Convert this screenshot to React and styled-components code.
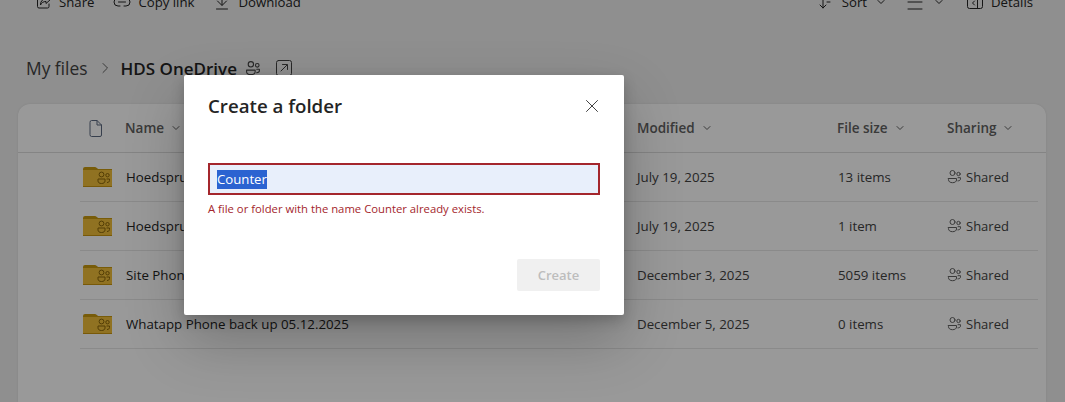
import React from "react";
import styled, { createGlobalStyle } from "styled-components";

const Global = createGlobalStyle`
  html, body { margin: 0; padding: 0; height: 100%; overflow: hidden; }
  body { font-family: "Open Sans", "Noto Sans", "Liberation Sans", sans-serif; background: #eeeeee; color: #242424; }
`;

const Page = styled.div`
  width: 1065px;
  height: 402px;
  position: relative;
  overflow: hidden;
  background: #eeeeee;
  display: flex;
  flex-direction: column;
  padding: 0 19px 0 18px;
  box-sizing: border-box;
`;

const Toolbar = styled.div`
  height: 24px;
  margin: -10px 0 0;
  display: flex;
  align-items: center;
  justify-content: space-between;
  padding: 0 13px 0 18px;
  font-size: 13.2px;
  flex: none;
`;

const ToolGroup = styled.div`
  display: flex;
  align-items: center;
`;

const ToolItem = styled.div`
  display: flex;
  align-items: center;
  gap: ${(p) => p.$gap ?? 8}px;
  margin-left: ${(p) => p.$left ?? 0}px;
  white-space: nowrap;
`;

const Crumbs = styled.div`
  display: flex;
  align-items: center;
  height: 28px;
  margin: 40px 0 0 8px;
  font-size: 17.4px;
  flex: none;
`;

const CrumbLink = styled.span`
  color: #424242;
`;

const CrumbCurrent = styled.span`
  font-weight: 600;
  font-size: 17px;
  color: #242424;
`;

const CrumbIcon = styled.span`
  display: inline-flex;
  margin-left: ${(p) => p.$left}px;
  margin-right: ${(p) => p.$right ?? 0}px;
`;

const Card = styled.div`
  margin-top: 22px;
  flex: 1;
  background: #ffffff;
  border-radius: 12px 12px 0 0;
  box-shadow: 0 0 2px rgba(0, 0, 0, 0.1);
`;

const columns = `
  display: grid;
  grid-template-columns: 46px 511px 201px 109px 1fr;
  align-items: center;
`;

const HeaderRow = styled.div`
  ${columns}
  height: 48px;
  padding-left: 62px;
  border-bottom: 1px solid #dcdcdc;
  font-size: 13.5px;
  font-weight: 600;
  color: #616161;
`;

const HeaderCell = styled.div`
  display: flex;
  align-items: center;
  gap: 8px;
  margin-left: ${(p) => p.$shift ?? 0}px;
`;

const HeaderIcon = styled.div`
  display: flex;
  padding-left: 9px;
`;

const Rows = styled.div`
  margin: 0 8px 0 62px;
`;

const Row = styled.div`
  ${columns}
  height: 48px;
  border-bottom: 1px solid #e6e6e6;
  font-size: 13.3px;
  line-height: 18px;
  color: #242424;
`;

const FolderCell = styled.div`
  display: flex;
  padding-left: 3px;
`;

const NameCell = styled.div`
  white-space: nowrap;
  margin-top: -1px;
`;

const MetaCell = styled.div`
  color: #424242;
  margin-top: -1px;
  white-space: nowrap;
`;

const SharedCell = styled.div`
  display: flex;
  align-items: center;
  gap: 4px;
  margin-top: -1px;
  color: #424242;
  font-size: 13px;
`;

const Overlay = styled.div`
  position: absolute;
  inset: 0;
  background: rgba(0, 0, 0, 0.4);
`;

const Dialog = styled.div`
  position: absolute;
  left: 184px;
  top: 75px;
  width: 440px;
  height: 240px;
  box-sizing: border-box;
  padding: 17px 24px 24px;
  background: #ffffff;
  border-radius: 2px;
  box-shadow: 0 25px 58px rgba(0, 0, 0, 0.24), 0 5px 14px rgba(0, 0, 0, 0.2);
  display: flex;
  flex-direction: column;
`;

const DialogHead = styled.div`
  display: flex;
  align-items: center;
  justify-content: space-between;
  height: 27px;
`;

const Title = styled.div`
  font-size: 18.7px;
  font-weight: 600;
  color: #242424;
`;

const CloseButton = styled.button`
  border: 0;
  background: none;
  padding: 0;
  display: flex;
  margin-right: 1px;
  color: #424242;
`;

const Field = styled.div`
  margin-top: 44px;
  height: 32px;
  box-sizing: border-box;
  border: 2px solid #a4262c;
  background: #e8effb;
  display: flex;
  align-items: center;
  padding-left: 7px;
  font-size: 13.2px;
`;

const Selected = styled.span`
  background: #2b63d1;
  color: #ffffff;
  line-height: 19px;
`;

const ErrorText = styled.div`
  margin-top: 5px;
  font-size: 11.3px;
  line-height: 18px;
  color: #a4262c;
`;

const Footer = styled.div`
  margin-top: auto;
  display: flex;
  justify-content: flex-end;
`;

const CreateButton = styled.button`
  width: 83px;
  height: 32px;
  border: 0;
  border-radius: 2px;
  background: #f0f0f0;
  color: #bdbdbd;
  font: 600 13px "Open Sans", "Noto Sans", sans-serif;
`;

const Ic = ({ w = 16, h = 16, vb, children, color = "currentColor", sw = 1 }) => (
  <svg width={w} height={h} viewBox={vb || `0 0 ${w} ${h}`} fill="none" stroke={color} strokeWidth={sw} strokeLinecap="round" strokeLinejoin="round">
    {children}
  </svg>
);

const Chevron = ({ size = 8, color = "#616161" }) => (
  <Ic w={size} h={size} vb="0 0 8 8" color={color}>
    <path d="M1 2.5 4 5.5 7 2.5" />
  </Ic>
);

const People = ({ size = 15, color = "#616161" }) => (
  <Ic w={size} h={size} vb="0 0 15 15" color={color}>
    <circle cx="5.5" cy="4" r="2.5" />
    <circle cx="11.5" cy="5" r="1.7" />
    <path d="M1.500 9.500h8v1.500c0 1.600-1.600 2.700-4 2.700s-4-1.100-4-2.700z" />
    <path d="M11 8.700h2.500v1.200c0 1.200-1 2-2.600 2" />
  </Ic>
);

const Folder = () => (
  <svg width="29" height="20" viewBox="0 0 29 20">
    <path d="M0 2a2 2 0 0 1 2-2h10c1 0 2 1 3 2h14v4H0z" fill="#c99a10" />
    <rect y="3" width="29" height="17" fill="#f0bf3a" />
    <rect y="19" width="29" height="1" fill="#c9950f" />
    <g fill="none" stroke="#8a6508" strokeWidth="1">
      <circle cx="18.500" cy="7.500" r="2.400" />
      <circle cx="24.500" cy="8.200" r="1.700" />
      <path d="M15 12h7v2c0 1.600-1.400 2.500-3.500 2.500S15 15.600 15 14z" />
      <path d="M23.500 12h3v1.500c0 1.200-1 2-2.500 2" />
    </g>
  </svg>
);

const files = [
  ["Hoedspruit Phone back up", "July 19, 2025", "13 items"],
  ["Hoedspruit Radio back up", "July 19, 2025", "1 item"],
  ["Site Phone back up", "December 3, 2025", "5059 items"],
  ["Whatapp Phone back up 05.12.2025", "December 5, 2025", "0 items"],
];

export default function App() {
  return (
    <Page>
      <Global />
      <Toolbar>
        <ToolGroup>
          <ToolItem $gap={7}>
            <Ic>
              <path d="M7 2.500H3a1.500 1.500 0 0 0-1.500 1.500v8.500A1.500 1.500 0 0 0 3 14h8.500a1.500 1.500 0 0 0 1.500-1.500V10" />
              <path d="M10 1.500l4.500 4-4.500 4V7.500C7.500 7.500 5.500 8.500 4.500 11c0-4 2-6 5.500-6.500z" />
            </Ic>
            Share
          </ToolItem>
          <ToolItem $left={19} $gap={7}>
            <Ic w={18} h={16}>
              <path d="M7 4H5a4 4 0 0 0 0 8h2M11 4h2a4 4 0 0 1 0 8h-2M5.500 8h7" />
            </Ic>
            Copy link
          </ToolItem>
          <ToolItem $left={22} $gap={10}>
            <Ic w={12} h={16}>
              <path d="M6 1v10M1.500 7 6 11.500 10.500 7M0.500 15h11" />
            </Ic>
            Download
          </ToolItem>
        </ToolGroup>
        <ToolGroup>
          <ToolItem $gap={10}>
            <Ic w={13} h={16}>
              <path d="M4 1v13M1 11l3 3 3-3M8 5h4M8 8h3" />
            </Ic>
            Sort
            <Chevron color="#242424" />
          </ToolItem>
          <ToolItem $left={22} $gap={12}>
            <Ic w={16} h={16}>
              <path d="M1 1h14M1 8h14M1 15h14" />
            </Ic>
            <Chevron color="#242424" />
          </ToolItem>
          <ToolItem $left={24}>
            <Ic w={16} h={16}>
              <rect x="0.500" y="2.500" width="15" height="12" rx="2" />
              <path d="M10.500 2.500v12M7.500 7l-2 2 2 2" />
            </Ic>
            Details
          </ToolItem>
        </ToolGroup>
      </Toolbar>

      <Crumbs>
        <CrumbLink>My files</CrumbLink>
        <CrumbIcon $left={12} $right={11}>
          <Ic w={10} h={12} color="#616161">
            <path d="M3 1.500 7.500 6 3 10.500" />
          </Ic>
        </CrumbIcon>
        <CrumbCurrent>HDS OneDrive</CrumbCurrent>
        <CrumbIcon $left={8}>
          <People size={16} color="#424242" />
        </CrumbIcon>
        <CrumbIcon $left={15}>
          <Ic w={16} h={16} color="#424242">
            <rect x="0.500" y="0.500" width="15" height="15" rx="2" />
            <path d="M5 11 11 5M6.500 4.500H11.500V9.500" />
          </Ic>
        </CrumbIcon>
      </Crumbs>

      <Card>
        <HeaderRow>
          <HeaderIcon>
            <Ic w={13} h={17} color="#5c6a80">
              <path d="M1 2a1.500 1.500 0 0 1 1.500-1.500H8L12.500 5v10a1.500 1.500 0 0 1-1.500 1.500H2.500A1.500 1.500 0 0 1 1 15z" />
              <path d="M8 .500V5h4.500" />
            </Ic>
          </HeaderIcon>
          <HeaderCell $shift={-1}>Name <Chevron /></HeaderCell>
          <HeaderCell>Modified <Chevron /></HeaderCell>
          <HeaderCell $shift={-1}>File size <Chevron /></HeaderCell>
          <HeaderCell>Sharing <Chevron /></HeaderCell>
        </HeaderRow>
        <Rows>
          {files.map(([name, date, size]) => (
            <Row key={name}>
              <FolderCell><Folder /></FolderCell>
              <NameCell>{name}</NameCell>
              <MetaCell>{date}</MetaCell>
              <MetaCell>{size}</MetaCell>
              <SharedCell>
                <People />
                Shared
              </SharedCell>
            </Row>
          ))}
        </Rows>
      </Card>

      <Overlay />

      <Dialog>
        <DialogHead>
          <Title>Create a folder</Title>
          <CloseButton aria-label="Close">
            <Ic w={14} h={14}>
              <path d="M1.500 1.500 12.500 12.500M12.500 1.500 1.500 12.500" />
            </Ic>
          </CloseButton>
        </DialogHead>
        <Field>
          <Selected>Counter</Selected>
        </Field>
        <ErrorText>A file or folder with the name Counter already exists.</ErrorText>
        <Footer>
          <CreateButton>Create</CreateButton>
        </Footer>
      </Dialog>
    </Page>
  );
}
